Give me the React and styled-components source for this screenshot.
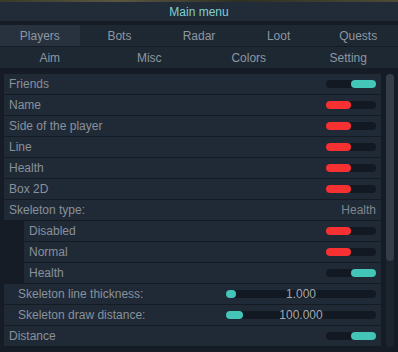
import styled, { createGlobalStyle } from 'styled-components';

const GlobalStyle = createGlobalStyle`
  html, body {
    margin: 0;
    padding: 0;
    background: #151c25;
  }
  body {
    font-family: "Liberation Sans", Arial, sans-serif;
    font-size: 12px;
  }
`;

const Window = styled.div`
  width: 398px;
  height: 352px;
  overflow: hidden;
  background: #151c25;
  display: flex;
  flex-direction: column;
`;

const TopStrip = styled.div`
  height: 2px;
  background: linear-gradient(90deg, #3a3a2a, #5a5640 30%, #2d3024 60%, #4e4a36);
`;

const TitleBar = styled.div`
  height: 19px;
  background: #222c38;
  color: #7fd0cf;
  font-size: 12px;
  display: flex;
  align-items: center;
  justify-content: center;
  margin-bottom: 4px;
`;

const TabRow = styled.div`
  display: grid;
  grid-template-columns: repeat(${(p) => p.cols}, 1fr);
  height: 21px;
  background: #1e2833;
  border-bottom: 1px solid #151c25;
`;

const Tab = styled.div`
  display: flex;
  align-items: center;
  justify-content: center;
  color: #8d97a1;
  background: ${(p) => (p.active ? '#27323e' : 'transparent')};
`;

const Body = styled.div`
  display: flex;
  margin-top: 5px;
  flex: 1;
`;

const List = styled.div`
  margin-left: 4px;
  width: 377px;
  display: flex;
  flex-direction: column;
`;

const Row = styled.div`
  height: 20px;
  border-bottom: 1px solid #151b23;
  background: #202a36;
  display: flex;
  align-items: center;
  padding: 0 5px 0 ${(p) => p.indent || 5}px;
  margin-left: ${(p) => p.offset || 0}px;
  color: #88919b;
  gap: 8px;
`;

const Label = styled.span`
  flex: 1;
  white-space: nowrap;
`;

const Value = styled.span`
  color: #7d868f;
`;

const Toggle = styled.div`
  width: 50px;
  height: 8px;
  border-radius: 4px;
  background: #131922;
  display: flex;
  justify-content: ${(p) => (p.on ? 'flex-end' : 'flex-start')};
`;

const Knob = styled.div`
  width: 25px;
  height: 8px;
  border-radius: 4px;
  background: ${(p) => (p.on ? '#43c5b7' : '#f73131')};
`;

const Slider = styled.div`
  position: relative;
  width: 150px;
  height: 8px;
  border-radius: 4px;
  background: #131922;
  display: flex;
  align-items: center;
  justify-content: center;
`;

const Grab = styled.div`
  position: absolute;
  left: 0;
  top: 0;
  height: 8px;
  border-radius: 4px;
  background: #43c5b7;
`;

const SliderValue = styled.span`
  position: relative;
  color: #a0a8b0;
  font-size: 12px;
  line-height: 8px;
`;

const Scroll = styled.div`
  margin-left: 5px;
  width: 8px;
  height: 273px;
  background: #1c242e;
  border-radius: 4px;
  display: flex;
  flex-direction: column;
`;

const Thumb = styled.div`
  height: 187px;
  background: #343e4b;
  border-radius: 4px;
`;

const SubGroup = styled.div`
  display: flex;
  flex-direction: column;
  background: #151c25;
`;

const toggles = [
  ['Friends', true],
  ['Name', false],
  ['Side of the player', false],
  ['Line', false],
  ['Health', false],
  ['Box 2D', false],
];

const skeleton = [
  ['Disabled', false],
  ['Normal', false],
  ['Health', true],
];

const ToggleRow = ({ label, on, offset, indent }) => (
  <Row offset={offset} indent={indent}>
    <Label>{label}</Label>
    <Toggle on={on}>
      <Knob on={on} />
    </Toggle>
  </Row>
);

const SliderRow = ({ label, value, grab }) => (
  <Row indent={14}>
    <Label>{label}</Label>
    <Slider>
      <Grab style={{ width: grab }} />
      <SliderValue>{value}</SliderValue>
    </Slider>
  </Row>
);

const App = () => {
  return (
    <Window>
      <GlobalStyle />
      <TopStrip />
      <TitleBar>Main menu</TitleBar>
      <TabRow cols={5}>
        <Tab active>Players</Tab>
        <Tab>Bots</Tab>
        <Tab>Radar</Tab>
        <Tab>Loot</Tab>
        <Tab>Quests</Tab>
      </TabRow>
      <TabRow cols={4}>
        <Tab>Aim</Tab>
        <Tab>Misc</Tab>
        <Tab>Colors</Tab>
        <Tab>Setting</Tab>
      </TabRow>
      <Body>
        <List>
          {toggles.map(([l, on]) => (
            <ToggleRow key={l} label={l} on={on} />
          ))}
          <Row>
            <Label>Skeleton type:</Label>
            <Value>Health</Value>
          </Row>
          <SubGroup>
            {skeleton.map(([l, on]) => (
              <ToggleRow key={l} label={l} on={on} offset={20} />
            ))}
          </SubGroup>
          <SliderRow label="Skeleton line thickness:" value="1.000" grab={10} />
          <SliderRow label="Skeleton draw distance:" value="100.000" grab={17} />
          <ToggleRow label="Distance" on />
        </List>
        <Scroll>
          <Thumb />
        </Scroll>
      </Body>
    </Window>
  );
};

export default App;
